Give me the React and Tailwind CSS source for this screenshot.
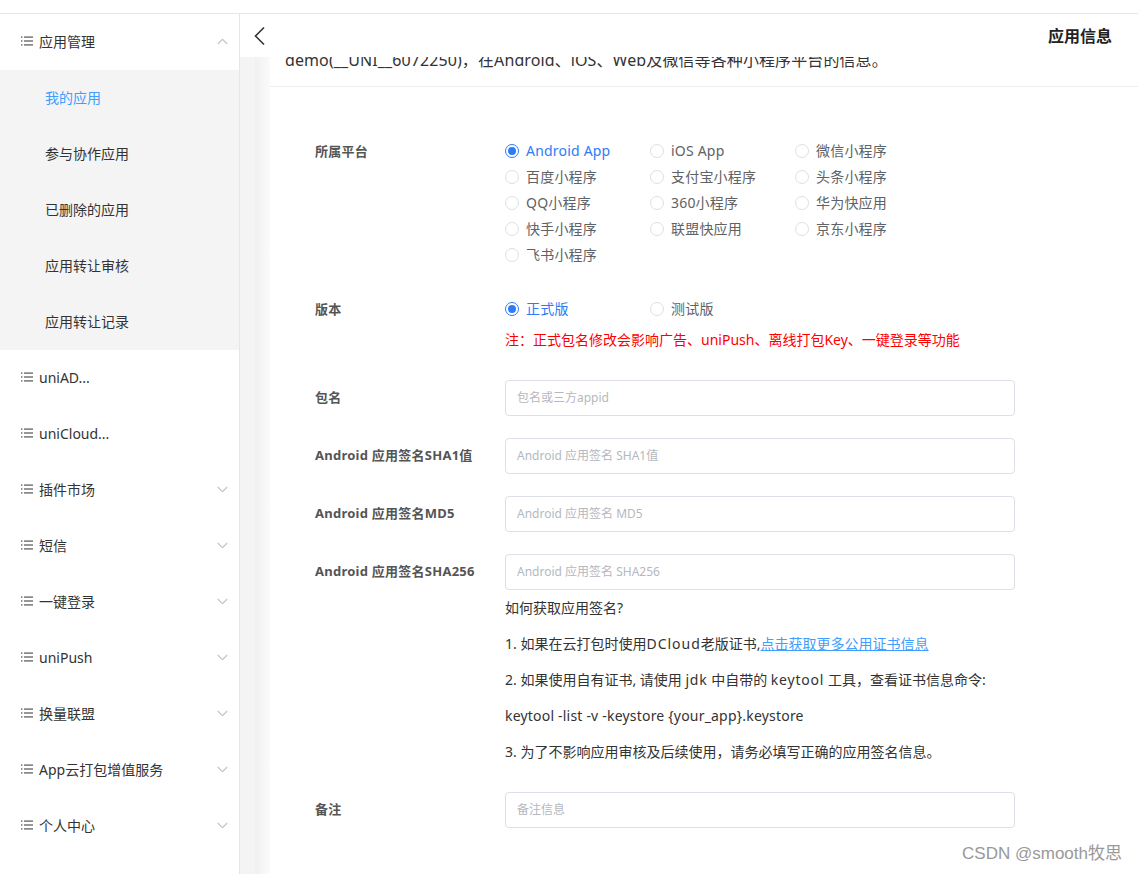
import React from 'react'

const font = 'font-["Noto_Sans","Noto_Sans_CJK_SC",sans-serif]'

const subMenu = ['我的应用', '参与协作应用', '已删除的应用', '应用转让审核', '应用转让记录']

const topMenu = [
  { name: 'uniAD...', arrow: false },
  { name: 'uniCloud...', arrow: false },
  { name: '插件市场', arrow: true },
  { name: '短信', arrow: true },
  { name: '一键登录', arrow: true },
  { name: 'uniPush', arrow: true },
  { name: '换量联盟', arrow: true },
  { name: 'App云打包增值服务', arrow: true },
  { name: '个人中心', arrow: true },
]

const platforms = [
  'Android App', 'iOS App', '微信小程序',
  '百度小程序', '支付宝小程序', '头条小程序',
  'QQ小程序', '360小程序', '华为快应用',
  '快手小程序', '联盟快应用', '京东小程序',
  '飞书小程序',
]

const ListIcon = () => (
  <svg width="12" height="10" viewBox="0 0 12 10" className="shrink-0">
    <g fill="#555">
      <rect x="0" y="0.5" width="1.5" height="1.2" />
      <rect x="0" y="4.4" width="1.5" height="1.2" />
      <rect x="0" y="8.3" width="1.5" height="1.2" />
      <rect x="3" y="0.5" width="9" height="1.2" />
      <rect x="3" y="4.4" width="9" height="1.2" />
      <rect x="3" y="8.3" width="9" height="1.2" />
    </g>
  </svg>
)

const Chevron = ({ up }) => (
  <svg width="11" height="7" viewBox="0 0 11 7" className="shrink-0">
    <path d={up ? 'M0.8 6L5.5 1.3L10.2 6' : 'M0.8 1L5.5 5.7L10.2 1'} fill="none" stroke="#c0c4cc" strokeWidth="1.1" />
  </svg>
)

const Radio = ({ label, checked }) => (
  <div className="flex items-center h-[26px] w-[145px]">
    {checked ? (
      <span className="w-[14px] h-[14px] rounded-full border border-[#2d7cf6] flex items-center justify-center shrink-0">
        <span className="w-[8px] h-[8px] rounded-full bg-[#2d7cf6]" />
      </span>
    ) : (
      <span className="w-[14px] h-[14px] rounded-full border border-[#dcdfe6] bg-white shrink-0" />
    )}
    <span className={`ml-[7px] text-[14px] leading-[26px] tracking-[0.2px] ${checked ? 'text-[#2d7cf6]' : 'text-[#606266]'}`}>{label}</span>
  </div>
)

const Label = ({ children, className = '' }) => (
  <div className={`w-[190px] shrink-0 text-[13px] font-bold tracking-[0.25px] text-[#555] ${className}`}>{children}</div>
)

const InputRow = ({ label, placeholder, className = '' }) => (
  <div className={`flex items-center ${className}`}>
    <Label>{label}</Label>
    <div className="w-[510px] h-[36px] border border-[#dcdfe6] rounded-[4px] flex items-center px-[11px] text-[12px] text-[#b4b8c0]">
      {placeholder}
    </div>
  </div>
)

export default function App() {
  return (
    <div className={`relative h-[874px] overflow-hidden bg-white text-[#333] ${font}`}>
      <div className="h-[14px] border-b border-[#e6e6e6]" />
      <div className="flex h-[860px]">
        <aside className="w-[240px] shrink-0 border-r border-[#e6e6e6] bg-white">
          <div className="h-[56px] flex items-center pl-[21px] pr-[11px] pb-[2px]">
            <ListIcon />
            <span className="ml-[6px] text-[14px] flex-1">应用管理</span>
            <Chevron up />
          </div>
          <div className="bg-[#f4f4f4]">
            {subMenu.map((s, i) => (
              <div key={s} className={`h-[56px] flex items-center pl-[45px] pb-[2px] text-[14px] ${i === 0 ? 'text-[#409eff]' : 'text-[#333]'}`}>
                {s}
              </div>
            ))}
          </div>
          {topMenu.map((m) => (
            <div key={m.name} className="h-[56px] flex items-center pl-[21px] pr-[11px] pb-[2px]">
              <ListIcon />
              <span className="ml-[6px] text-[14px] flex-1">{m.name}</span>
              {m.arrow && <Chevron />}
            </div>
          ))}
        </aside>

        <main className="flex-1 flex flex-col min-w-0">
          <header className="h-[43px] shrink-0 flex items-center justify-between pl-[13px] pr-[26px] bg-white relative z-10">
            <svg width="14" height="20" viewBox="0 0 14 20">
              <path d="M11 1.5L2.5 10L11 18.5" fill="none" stroke="#333" strokeWidth="1.6" />
            </svg>
            <span className="text-[16px] font-bold text-[#222]">应用信息</span>
          </header>
          <div className="flex flex-1 bg-[#f4f4f4] min-h-0">
            <div className="w-[15px] shrink-0" />
            <div className="w-[15px] shrink-0 bg-gradient-to-r from-[#f0f0f0] to-[#fbfbfb]" />
            <div className="flex-1 bg-white min-w-0">
              <div className="h-[30px] border-b border-[#eeeeee] overflow-hidden">
                <div className="-mt-[9px] pl-[15px] text-[16px] leading-[24px] tracking-[0.1px] text-[#333] whitespace-nowrap">
                  demo(__UNI__6072250)，在Android、iOS、Web及微信等各种小程序平台的信息。
                </div>
              </div>

              <div className="pl-[45px] pt-[51px]">
                <div className="flex">
                  <Label className="leading-[26px]">所属平台</Label>
                  <div className="grid grid-cols-[145px_145px_145px]">
                    {platforms.map((p, i) => (
                      <Radio key={p} label={p} checked={i === 0} />
                    ))}
                  </div>
                </div>

                <div className="flex mt-[28px]">
                  <Label className="leading-[26px]">版本</Label>
                  <div>
                    <div className="flex">
                      <Radio label="正式版" checked />
                      <Radio label="测试版" />
                    </div>
                    <div className="mt-[5px] text-[14px] leading-[26px] text-[#ff0000]">
                      注：正式包名修改会影响广告、uniPush、离线打包Key、一键登录等功能
                    </div>
                  </div>
                </div>

                <InputRow className="mt-[27px]" label="包名" placeholder="包名或三方appid" />
                <InputRow className="mt-[22px]" label="Android 应用签名SHA1值" placeholder="Android 应用签名 SHA1值" />
                <InputRow className="mt-[22px]" label="Android 应用签名MD5" placeholder="Android 应用签名  MD5" />
                <InputRow className="mt-[22px]" label="Android 应用签名SHA256" placeholder="Android 应用签名 SHA256" />

                <div className="pl-[190px] text-[14px] leading-[36px] text-[#333]">
                  <div>如何获取应用签名?</div>
                  <div>
                    1. 如果在云打包时使用<span className="tracking-[1px]">DCloud</span>老版证书,
                    <a className="text-[#409eff] underline">点击获取更多公用证书信息</a>
                  </div>
                  <div>
                    2. 如果使用自有证书, 请使用 <span className="tracking-[0.8px]">jdk</span> 中自带的 <span className="tracking-[0.8px]">keytool</span> 工具，查看证书信息命令:
                  </div>
                  <div className="tracking-[0.2px]">keytool -list -v -keystore {'{your_app}'}.keystore</div>
                  <div>3. 为了不影响应用审核及后续使用，请务必填写正确的应用签名信息。</div>
                </div>

                <InputRow className="mt-[22px]" label="备注" placeholder="备注信息" />
              </div>
            </div>
          </div>
        </main>
      </div>
      <div className="absolute right-[16px] bottom-[8px] text-[17px] text-[#999] font-['Liberation_Sans','Noto_Sans_CJK_SC',sans-serif]">
        CSDN @smooth牧思
      </div>
    </div>
  )
}
